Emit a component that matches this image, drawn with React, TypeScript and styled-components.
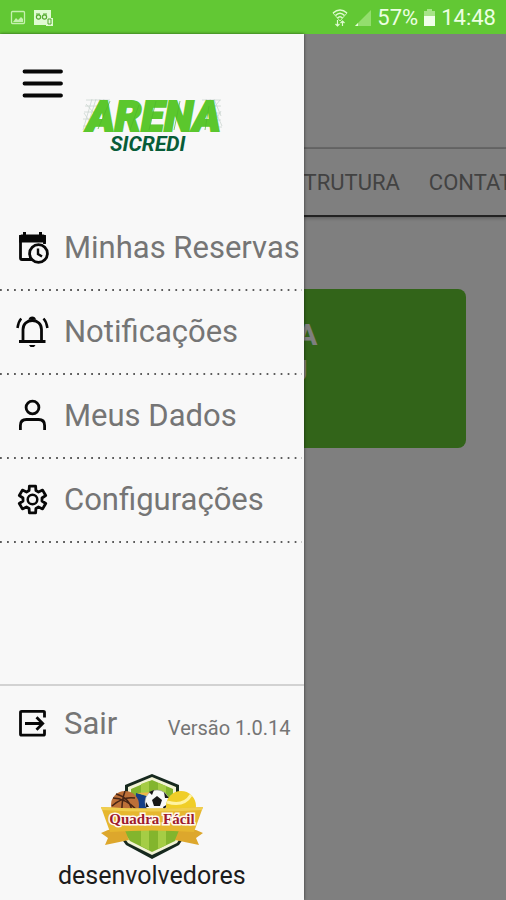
import React from "react";
import styled, { createGlobalStyle } from "styled-components";

const GlobalStyle = createGlobalStyle`
  * { box-sizing: border-box; }
  body { margin: 0; font-family: Roboto, "Liberation Sans", sans-serif; }
  button { font: inherit; color: inherit; background: none; border: 0; padding: 0; cursor: pointer; }
  a { color: inherit; text-decoration: none; }
  svg { display: block; flex: none; }
`;

const Screen = styled.div`
  min-height: 100vh;
  display: flex;
  flex-direction: column;
  background: #fff;
  overflow: hidden;
`;

const StatusBar = styled.header`
  height: 34px;
  display: flex;
  align-items: center;
  justify-content: space-between;
  padding: 2px 10px 0 10px;
  background: #62c834;
  color: #ecffe2;
  font-size: 22px;
  line-height: 32px;
`;

const StatusGroup = styled.div<{ $gap: number }>`
  display: flex;
  align-items: center;
  gap: ${(p) => p.$gap}px;
`;

const Stage = styled.div`
  position: relative;
  flex: 1;
  display: flex;
  flex-direction: column;
`;

const Page = styled.main`
  flex: 1;
  overflow: hidden;
`;

const PageTop = styled.div`
  height: 115px;
  border-bottom: 2px solid #d4d4d4;
`;

const Tabs = styled.nav`
  height: 68px;
  display: flex;
  align-items: center;
  gap: 29px;
  padding-left: 278px;
  border-bottom: 2px solid #444;
  box-shadow: 0 1px 4px rgba(0, 0, 0, 0.3);
  color: #858585;
  font-size: 22px;
  white-space: nowrap;
`;

const Card = styled.section`
  margin: 72px 40px 0;
  height: 159px;
  padding: 28px 0 0;
  border-radius: 8px;
  background: #64c832;
  color: #fff;
  font-size: 30px;
  line-height: 36px;
  font-weight: 700;
  text-align: center;
`;

const CardLine = styled.p`
  margin: 0;
`;

const Scrim = styled.div`
  position: absolute;
  inset: 0;
  background: rgba(0, 0, 0, 0.5);
`;

const Drawer = styled.aside`
  position: absolute;
  inset: 0 auto 0 0;
  width: 60%;
  display: flex;
  flex-direction: column;
  background: #f8f8f8;
  box-shadow: 0 0 3px rgba(0, 0, 0, 0.6);
`;

const DrawerHeader = styled.div`
  height: 173px;
  display: flex;
  align-items: flex-start;
  gap: 18px;
  padding: 32px 0 0 22px;
`;

const LogoBox = styled.div`
  padding-top: 30px;
`;

const Menu = styled.ul`
  margin: 0;
  padding: 0;
  list-style: none;
`;

const MenuItem = styled.li`
  height: 84px;
  margin-right: 2px;
  background-image: linear-gradient(90deg, #5c5c5c 2px, transparent 2px);
  background-size: 7px 2px;
  background-position: left bottom;
  background-repeat: space no-repeat;
`;

const MenuLink = styled.a`
  height: 80px;
  display: flex;
  align-items: center;
  gap: 15px;
  padding-left: 16px;
  color: #757575;
  font-size: 31px;
  white-space: nowrap;
`;

const Footer = styled.footer`
  margin-top: auto;
  border-top: 2px solid #d2d2d2;
  display: flex;
  flex-direction: column;
`;

const ExitRow = styled.div`
  height: 72px;
  display: flex;
  align-items: center;
  justify-content: space-between;
  padding: 2px 13px 0 16px;
  color: #757575;
`;

const ExitButton = styled.button`
  display: flex;
  align-items: center;
  gap: 15px;
  font-size: 31px;
`;

const Version = styled.span`
  padding-top: 10px;
  font-size: 20px;
`;

const Developer = styled.div`
  display: flex;
  flex-direction: column;
  align-items: center;
  padding: 15px 0 7px;
  color: #1c1c1c;
  font-size: 25px;
  line-height: 34px;
`;

const iconProps = {
  width: 33,
  height: 33,
  viewBox: "0 0 33 33",
  fill: "none",
  stroke: "#080808",
  strokeWidth: 2.8,
};

const CalendarClock = () => (
  <svg {...iconProps}>
    <path d="M28.500 13V5.500H4.500V27Q4.500 28.500 6 28.500H16" />
    <path d="M3.100 6Q3.100 3.500 5.500 3.500H27.500Q29.900 3.500 29.900 6V11.500H3.100Z" fill="#080808" stroke="none" />
    <path d="M8.500 1V6M24.500 1V6" strokeWidth="3" />
    <circle cx="22.500" cy="22.500" r="8.900" fill="#f8f8f8" />
    <path d="M22 17.500V23L26 25.500" strokeWidth="2.400" />
  </svg>
);

const Bell = () => (
  <svg {...iconProps}>
    <path d="M7 26.500V14.500C7 9 11 5.500 16.300 5.500S25.500 9 25.500 14.500V26.500" />
    <path d="M3 26.500H29.500" strokeWidth="3" />
    <path d="M12.500 4.800C13 0.500 19.500 0.500 20 4.800Z" fill="#080808" stroke="none" />
    <path d="M13 30H19.500L18 32H14.500Z" fill="#080808" stroke="none" />
    <path d="M5.200 3.500C3 6 2 9 1.500 13M27.500 3.500C29.800 6 30.900 9 31.400 13" strokeWidth="2.500" />
  </svg>
);

const Person = () => (
  <svg {...iconProps}>
    <circle cx="16.500" cy="8.500" r="6.400" />
    <path d="M4.400 31V26.500C4.400 22.500 7 20.500 10.500 20.500H22.500C26 20.500 28.600 22.500 28.600 26.500V31" />
  </svg>
);

const gearOutline = Array.from({ length: 6 }, (_, tooth) =>
  [
    [-21, 9.6],
    [-13, 13.8],
    [13, 13.8],
    [21, 9.6],
  ].map(([offset, radius]) => {
    const angle = ((tooth * 60 - 90 + offset) * Math.PI) / 180;
    return `${(16.5 + radius * Math.cos(angle)).toFixed(1)},${(16.5 + radius * Math.sin(angle)).toFixed(1)}`;
  })
)
  .flat()
  .join(" ");

const Gear = () => (
  <svg {...iconProps} strokeLinejoin="round">
    <polygon points={gearOutline} />
    <circle cx="16.500" cy="16.500" r="4.800" strokeWidth="2.500" />
  </svg>
);

const Exit = () => (
  <svg {...iconProps}>
    <path d="M28.500 10.500V5.500Q28.500 4.300 27.300 4.300H5.700Q4.500 4.300 4.500 5.500V27Q4.500 28.200 5.700 28.200H27.300Q28.500 28.200 28.500 27V22.500" />
    <path d="M9 16.500H26M20.500 10.300L26.700 16.500L20.500 22.700" />
  </svg>
);

const Burger = () => (
  <svg width="42" height="34" viewBox="0 0 42 34" stroke="#080808" strokeWidth="3.800" strokeLinecap="round">
    <path d="M2.500 5.500H39M2.500 17.500H39M2.500 29.500H39" />
  </svg>
);

const ArenaLogo = () => (
  <svg width="142" height="62" viewBox="0 0 142 62" role="img" aria-label="Arena Sicredi">
    <g fill="none" stroke="#ccd6d1" strokeWidth="0.800">
      <path d="M10 3L1 34M14 3L4 35M18 3L7 36M22 3L10 35M4 4H28M3 10H22M2 16H20M1 23H17M1 30H14M4 8L18 24M2 17L12 32" />
      <path d="M124 3L137 35M128 3L140 30M132 3L139 20M120 4H139M126 10H139M128 17H139M130 24H139M132 31H140M138 4L127 18M139 15L130 30" />
    </g>
    <text x="5" y="35" fontFamily="Roboto, sans-serif" fontStyle="italic" fontWeight="900" fontSize="42" fill="#5bc72d" stroke="#5bc72d" strokeWidth="2">
      ARENA
    </text>
    <path d="M16 33L28 5M48 34L57 9M74 5L67 34M98 5L92 34M127 10L123 34" stroke="#4db62c" strokeWidth="0.700" />
    <text x="28" y="55" fontFamily="Roboto, sans-serif" fontStyle="italic" fontWeight="700" fontSize="21" fill="#075c38">
      SICREDI
    </text>
  </svg>
);

const QuadraBadge = () => (
  <svg width="104" height="86" viewBox="0 0 104 86" role="img" aria-label="Quadra Fácil">
    <path d="M52 1L79 12V22L91 31V54L79 72L52 86L26 72L13 54V31L25 22V12Z" fill="#17291f" />
    <path d="M52 4L76 14V24L88 33V53L77 70L52 82L28 70L16 53V33L28 24V14Z" fill="#f2f3d5" />
    <path d="M52 7L73 16V26L85 35V52L75 68L52 79L30 68L19 52V35L31 26V16Z" fill="#83b52d" />
    <path d="M41 11L49 8V77L41 73ZM58 10L66 13V72L58 76Z" fill="#a5cd45" />
    <path d="M8 57L1 60L8 65L5 72L29 67L24 55ZM96 57L103 60L96 65L99 72L75 67L80 55Z" fill="#dda72c" />
    <path d="M36 20L50 24L61 39H35Z" fill="#163f86" />
    <path d="M37 20L55 19L51 24Z" fill="#f1b44b" />
    <circle cx="25" cy="32" r="14" fill="#bd7038" />
    <path d="M13 25Q25 25 37 37M25 18Q21 29 22 44M16 21Q31 25 32 40M12 33Q23 23 35 25" fill="none" stroke="#472515" strokeWidth="1.500" />
    <circle cx="57" cy="29" r="12" fill="#f9f9f9" stroke="#999" strokeWidth="0.600" />
    <path d="M57 23L62 27L60 33H54L52 27ZM49 19L54 17L52 22ZM64 19L69 25L65 25ZM46 29L49 34L46 34ZM68 31L64 37L63 34Z" fill="#171717" />
    <circle cx="81" cy="33" r="15" fill="#f0ce28" />
    <path d="M67 29Q84 34 91 22" fill="none" stroke="#fff3a2" strokeWidth="3" />
    <path d="M1 34Q52 37 103 34L94 59Q52 56 10 59Z" fill="#e6b72f" />
    <path d="M1 34Q52 37 103 34L102 37Q52 40 2 37Z" fill="#f0ce4e" />
    <text x="52" y="51" textAnchor="middle" fontFamily="Liberation Serif, serif" fontWeight="700" fontSize="15" fill="#9d1b2b" stroke="#fff8ee" strokeWidth="3" paintOrder="stroke">
      Quadra Fácil
    </text>
  </svg>
);

const Notifications = () => (
  <>
    <svg width="16" height="16" viewBox="0 0 16 16" opacity="0.750">
      <rect x="1.500" y="1.500" width="13" height="12" rx="1" fill="none" stroke="#e6ffd8" strokeWidth="1.300" />
      <path d="M3 12L6 8L8 10L11 7L13 9V12Z" fill="#e6ffd8" />
    </svg>
    <svg width="21" height="18" viewBox="0 0 21 18">
      <path d="M1 1H18V9H20V17H13V16H1Z" fill="#dffbd1" />
      <circle cx="5.500" cy="8" r="2.100" fill="none" stroke="#54a92e" strokeWidth="1.200" />
      <circle cx="11.500" cy="8" r="2.100" fill="none" stroke="#54a92e" strokeWidth="1.200" />
      <path d="M3 5H7M10 5H14M15 10H18V15H15Z" fill="none" stroke="#54a92e" />
    </svg>
  </>
);

const Wifi = () => (
  <svg width="16" height="20" viewBox="0 0 16 20" fill="none" stroke="#dffbd1" strokeWidth="1.600">
    <path d="M1 5Q8 -1 15 5M3.500 7.500Q8 3 12.500 7.500M5.500 10Q8 7.500 10.500 10" />
    <path d="M1 5L8 13L15 5" strokeWidth="0.800" />
    <path d="M5.500 12V18M3.500 16L5.500 18L7.500 16M10.500 18V13M8.500 15L10.500 13L12.500 15" strokeWidth="1.200" />
  </svg>
);

const Signal = () => (
  <svg width="19" height="18" viewBox="0 0 19 18">
    <path d="M18 1V17H2Z" fill="#93de6d" />
    <path d="M5 14V17H2Z" fill="#e6ffd8" />
  </svg>
);

const Battery = () => (
  <svg width="13" height="18" viewBox="0 0 13 18">
    <path d="M4 0H9V2H12V8H1V2H4Z" fill="#a6e487" />
    <path d="M1 7H12V17H1Z" fill="#f0ffe9" />
  </svg>
);

const entries = [
  { label: "Minhas Reservas", icon: <CalendarClock /> },
  { label: "Notificações", icon: <Bell /> },
  { label: "Meus Dados", icon: <Person /> },
  { label: "Configurações", icon: <Gear /> },
];

export default function App() {
  return (
    <Screen>
      <GlobalStyle />
      <StatusBar>
        <StatusGroup $gap={7}>
          <Notifications />
        </StatusGroup>
        <StatusGroup $gap={5}>
          <Wifi />
          <Signal />
          <span>57%</span>
          <Battery />
          <span>14:48</span>
        </StatusGroup>
      </StatusBar>
      <Stage>
        <Page>
          <PageTop />
          <Tabs>
            <a href="#estrutura">ESTRUTURA</a>
            <a href="#contato">CONTATO</a>
          </Tabs>
          <Card>
            <CardLine>RESERVA</CardLine>
            <CardLine>AREIA J</CardLine>
          </Card>
        </Page>
        <Scrim />
        <Drawer>
          <DrawerHeader>
            <button type="button" aria-label="Menu">
              <Burger />
            </button>
            <LogoBox>
              <ArenaLogo />
            </LogoBox>
          </DrawerHeader>
          <Menu>
            {entries.map((entry) => (
              <MenuItem key={entry.label}>
                <MenuLink href="#menu">
                  {entry.icon}
                  {entry.label}
                </MenuLink>
              </MenuItem>
            ))}
          </Menu>
          <Footer>
            <ExitRow>
              <ExitButton type="button">
                <Exit />
                Sair
              </ExitButton>
              <Version>Versão 1.0.14</Version>
            </ExitRow>
            <Developer>
              <QuadraBadge />
              desenvolvedores
            </Developer>
          </Footer>
        </Drawer>
      </Stage>
    </Screen>
  );
}
